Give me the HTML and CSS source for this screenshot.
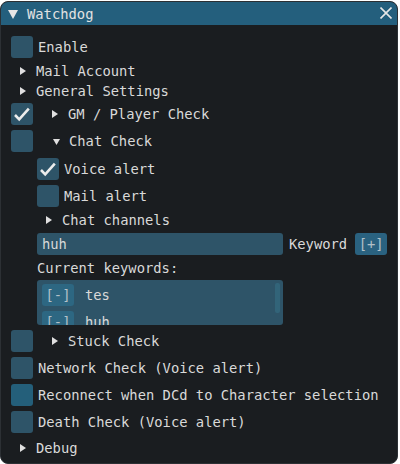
FILE: index.html
```html
<!DOCTYPE html>
<html>
<head>
<meta charset="utf-8">
<link rel="stylesheet" href="styles.css">
</head>
<body>
<div class="window">
  <div class="titlebar">
    <svg class="title-arrow" width="10" height="9" viewBox="0 0 10 9"><polygon points="0,0 10,0 5,9" fill="#e6e6e6"/></svg>
    <span class="title">Watchdog</span>
    <svg class="close" width="12" height="12" viewBox="0 0 12 12"><path d="M0.5 0.5 L11.5 11.5 M11.5 0.5 L0.5 11.5" stroke="#e6e6e6" stroke-width="1.6"/></svg>
  </div>
  <div class="content">
    <div class="row"><span class="check"></span><span class="label">Enable</span></div>
    <div class="tree"><svg class="arr-r" width="6" height="8" viewBox="0 0 6 8"><polygon points="0,0 6,4 0,8" fill="#e0e0e0"/></svg><span class="tlabel">Mail Account</span></div>
    <div class="tree"><svg class="arr-r" width="6" height="8" viewBox="0 0 6 8"><polygon points="0,0 6,4 0,8" fill="#e0e0e0"/></svg><span class="tlabel">General Settings</span></div>
    <div class="row"><span class="check"><svg width="22" height="22" viewBox="0 0 22 22"><polyline points="4,12 8.2,16.3 17.8,5.6" fill="none" stroke="#ececec" stroke-width="2.6"/></svg></span><svg class="arr-r arr-after" width="6" height="8" viewBox="0 0 6 8"><polygon points="0,0 6,4 0,8" fill="#e0e0e0"/></svg><span class="tlabel">GM / Player Check</span></div>
    <div class="row row-chat"><span class="check"></span><svg class="arr-d arr-after" width="7" height="6" viewBox="0 0 7 6"><polygon points="0,0 7,0 3.5,6" fill="#e0e0e0"/></svg><span class="tlabel">Chat Check</span></div>
    <div class="sub">
      <div class="row"><span class="check"><svg width="22" height="22" viewBox="0 0 22 22"><polyline points="4,12 8.2,16.3 17.8,5.6" fill="none" stroke="#ececec" stroke-width="2.6"/></svg></span><span class="label">Voice alert</span></div>
      <div class="row"><span class="check"></span><span class="label">Mail alert</span></div>
      <div class="tree tree-cc"><svg class="arr-r" width="6" height="8" viewBox="0 0 6 8"><polygon points="0,0 6,4 0,8" fill="#e0e0e0"/></svg><span class="tlabel">Chat channels</span></div>
      <div class="row">
        <div class="input">huh</div>
        <span class="kw">Keyword</span>
        <span class="btn">[+]</span>
      </div>
      <div class="tree"><span class="plain">Current keywords:</span></div>
      <div class="listbox">
        <div class="items">
          <div class="item"><span class="btn btn-rm">[-]</span><span class="itext">tes</span></div>
          <div class="item"><span class="btn btn-rm">[-]</span><span class="itext">huh</span></div>
        </div>
        <div class="scrollbar"></div>
      </div>
    </div>
    <div class="row"><span class="check"></span><svg class="arr-r arr-after" width="6" height="8" viewBox="0 0 6 8"><polygon points="0,0 6,4 0,8" fill="#e0e0e0"/></svg><span class="tlabel">Stuck Check</span></div>
    <div class="row"><span class="check"></span><span class="label">Network Check (Voice alert)</span></div>
    <div class="row"><span class="check hover"></span><span class="label">Reconnect when DCd to Character selection</span></div>
    <div class="row row-death"><span class="check"></span><span class="label">Death Check (Voice alert)</span></div>
    <div class="tree"><svg class="arr-r" width="6" height="8" viewBox="0 0 6 8"><polygon points="0,0 6,4 0,8" fill="#e0e0e0"/></svg><span class="tlabel">Debug</span></div>
  </div>
</div>
</body>
</html>
```
FILE: styles.css
```css
html, body {
  margin: 0;
  padding: 0;
  background: #ffffff;
}
body {
  font-family: "DejaVu Sans Mono", monospace;
  font-size: 13.8px;
  color: #d9d9d9;
}
.window {
  box-sizing: border-box;
  width: 398px;
  height: 463px;
  margin-top: 1px;
  background: #1a1d20;
  border: 1px solid #2c3034;
  border-radius: 8px;
  overflow: hidden;
}
.titlebar {
  height: 23px;
  background: #245f7d;
  display: flex;
  align-items: center;
  position: relative;
}
.title-arrow {
  margin-left: 7px;
  margin-top: 1px;
}
.title {
  margin-left: 9px;
  color: #e2e2e2;
}
.close {
  margin-left: auto;
  margin-right: 5px;
  margin-top: -2px;
}
.content {
  padding: 11px 0 0 10px;
}
.row {
  display: flex;
  align-items: center;
  height: 22px;
  margin-bottom: 5px;
}
.row-chat { margin-bottom: 6px; }
.row-death { margin-bottom: 7px; }
.tree {
  display: flex;
  align-items: center;
  height: 16px;
  margin-bottom: 4px;
}
.tree-cc { margin-bottom: 5px; }
.check {
  width: 22px;
  height: 22px;
  border-radius: 3px;
  background: #2e5468;
  flex: none;
}
.check svg { display: block; }
.check.hover { background: #245f7a; }
.label { margin-left: 5px; }
.arr-r { margin-left: 9px; flex: none; }
.arr-d { flex: none; }
.arr-after { margin-left: 19px; }
.arr-d.arr-after { margin-left: 20px; margin-top: 1px; }
.tlabel { margin-left: 10px; }
.arr-d + .tlabel { margin-left: 9px; }
.sub { padding-left: 26px; }
.sub .tree .plain { margin-left: 0; }
.input {
  box-sizing: border-box;
  width: 246px;
  height: 22px;
  background: #2e5468;
  border-radius: 3px;
  padding-left: 5px;
  display: flex;
  align-items: center;
}
.kw { margin-left: 6px; }
.btn {
  box-sizing: border-box;
  width: 32px;
  height: 22px;
  border-radius: 3px;
  background: #2a6280;
  color: #b3c1c8;
  display: flex;
  align-items: center;
  justify-content: center;
  margin-left: 8px;
}
.listbox {
  box-sizing: border-box;
  width: 246px;
  height: 45px;
  background: #2e5468;
  border-radius: 3px;
  margin-bottom: 5px;
  overflow: hidden;
  display: flex;
  padding: 4px 3px 0 5px;
}
.items {
  flex: 1;
  display: flex;
  flex-direction: column;
  gap: 5px;
}
.item {
  display: flex;
  align-items: center;
  height: 22px;
  flex: none;
}
.btn-rm { margin-left: 0; background: #2d6782; }
.itext { margin-left: 11px; }
.scrollbar {
  width: 5px;
  height: 30px;
  margin-top: -1px;
  border-radius: 2px;
  background: #326479;
  flex: none;
}
```
